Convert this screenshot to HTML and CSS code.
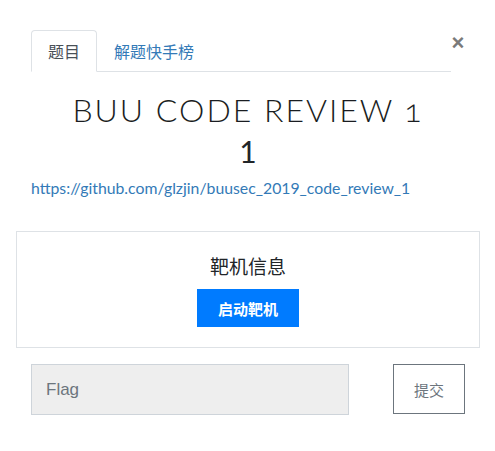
FILE: index.html
```html
<!DOCTYPE html>
<html lang="zh">
<head>
<meta charset="utf-8">
<title>BUU CODE REVIEW 1</title>
<link rel="stylesheet" href="styles.css">
</head>
<body>
<div class="modal">
  <div class="header">
    <ul class="tabs">
      <li class="tab active">题目</li>
      <li class="tab">解题快手榜</li>
    </ul>
    <button class="close" type="button">×</button>
  </div>
  <div class="body">
    <h2 class="title">BUU CODE REVIEW 1</h2>
    <div class="points">1</div>
    <p class="desc"><a href="#">https://github.com/glzjin/buusec_2019_code_review_1</a></p>
    <div class="target">
      <div class="target-title">靶机信息</div>
      <button class="btn-start" type="button">启动靶机</button>
    </div>
    <div class="submit-row">
      <input class="flag" type="text" placeholder="Flag">
      <button class="btn-submit" type="button">提交</button>
    </div>
  </div>
</div>
</body>
</html>
```

FILE: styles.css
```css
html, body {
  margin: 0;
  padding: 0;
  background: #fff;
}
body {
  font-family: Lato, "Noto Sans CJK SC", sans-serif;
  color: #212529;
}
.modal {
  padding: 30px 15px 0 16px;
}
.header {
  display: flex;
  align-items: flex-start;
  padding: 0 15px 0 15px;
}
.tabs {
  flex: 1;
  display: flex;
  list-style: none;
  margin: 0;
  padding: 0;
  border-bottom: 1px solid #dee2e6;
}
.tab {
  font-family: "Noto Sans CJK SC", sans-serif;
  font-size: 16px;
  line-height: 24px;
  padding: 8px 16px;
  margin-bottom: -1px;
  border: 1px solid transparent;
  border-radius: 4px 4px 0 0;
  color: #337ab7;
}
.tab.active {
  color: #495057;
  border-color: #dee2e6 #dee2e6 #fff;
  background: #fff;
}
.close {
  width: 14px;
  margin: 0;
  padding: 0;
  border: 0;
  background: none;
  font-family: "Liberation Sans", sans-serif;
  font-size: 22px;
  font-weight: bold;
  line-height: 26px;
  color: #7a7a7a;
}
.body {
  display: flex;
  flex-direction: column;
}
.title {
  margin: 16px 0 0;
  text-align: center;
  font-family: Lato, sans-serif;
  font-weight: 300;
  font-size: 32px;
  line-height: 43px;
  letter-spacing: 2px;
  font-feature-settings: "onum";
  color: #1a1d21;
}
.points {
  text-align: center;
  font-family: Lato, sans-serif;
  font-size: 30px;
  line-height: 41px;
  color: #212529;
}
.desc {
  margin: 4px 0 0;
  padding-left: 15px;
  font-size: 15.8px;
  line-height: 24px;
}
.desc a {
  color: #337ab7;
  text-decoration: none;
}
.target {
  margin-top: 31px;
  border: 1px solid #dee2e6;
  display: flex;
  flex-direction: column;
  align-items: center;
  padding: 20px 0 20px;
}
.target-title {
  font-family: "Noto Sans CJK SC", sans-serif;
  font-size: 19px;
  line-height: 28px;
  color: #212529;
}
.btn-start {
  margin-top: 9px;
  width: 102px;
  height: 38px;
  border: 0;
  background: #007bff;
  color: #fff;
  font-family: "Noto Sans CJK SC", sans-serif;
  font-weight: bold;
  font-size: 15px;
}
.submit-row {
  display: flex;
  justify-content: space-between;
  padding: 16px 15px 0;
}
.flag {
  box-sizing: border-box;
  width: 318px;
  height: 51px;
  margin: 0;
  padding: 0 14px;
  background: #eee;
  border: 1px solid #ced4da;
  font-family: "Liberation Sans", sans-serif;
  font-size: 17px;
  color: #495057;
}
.flag::placeholder {
  color: #6c757d;
}
.btn-submit {
  box-sizing: border-box;
  width: 72px;
  height: 50px;
  margin: 0;
  background: #fff;
  border: 1px solid #6c757d;
  color: #6c757d;
  font-family: "Noto Sans CJK SC", sans-serif;
  font-size: 15px;
}
```
